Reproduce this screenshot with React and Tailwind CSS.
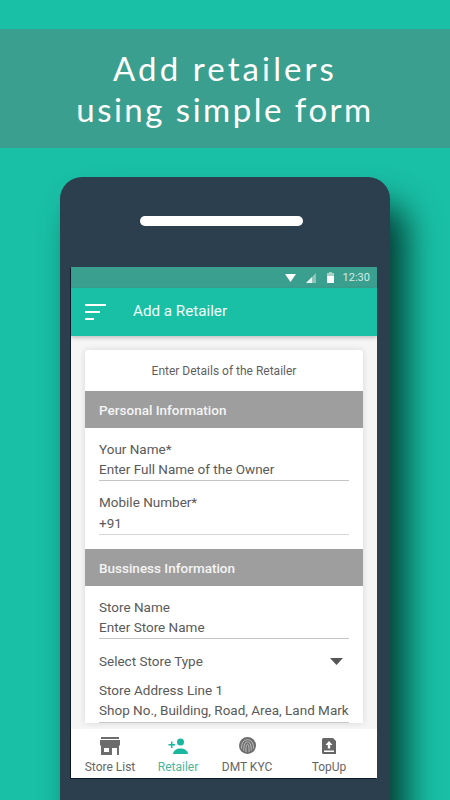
const Field = ({ label, value, className = "", valueClass = "h-[22px]", lineClass = "border-[#c4c4c4]" }) => (
  <div className={`flex flex-col ${className}`}>
    <div className="text-[13.5px] leading-[20px] text-[#5a5a5a]">{label}</div>
    <div className={`text-[13.5px] leading-[20px] text-[#5a5a5a] border-b ${valueClass} ${lineClass} whitespace-nowrap`}>{value}</div>
  </div>
);

const Section = ({ children }) => (
  <div className="h-[37px] bg-[#9e9e9e] flex items-center pl-[14px] pt-[1px] text-[13.5px] font-medium text-[#f4f4f4]">{children}</div>
);

const NavItem = ({ icon, label, active, className = "" }) => (
  <div className={`flex flex-col items-center ${className}`}>
    <div className="h-[25px] flex items-center justify-center">{icon}</div>
    <div className={`text-[12px] leading-[16px] mt-[1px] ${active ? "text-[#4cb59c]" : "text-[#666666]"}`}>{label}</div>
  </div>
);

export default function App() {
  return (
    <div className="w-[450px] h-[800px] overflow-hidden bg-[#19c0a6] flex flex-col font-['Roboto',sans-serif]">
      <div className="mt-[29px] h-[119px] shrink-0 bg-[#3a9f8f] flex flex-col items-center justify-center text-white font-['Lato',sans-serif] text-[33px] leading-[41px]">
        <div className="tracking-[3.1px]">Add retailers</div>
        <div className="tracking-[2.5px]">using simple form</div>
      </div>

      <div className="mt-[29px] ml-[60px] w-[330px] h-[700px] shrink-0 rounded-t-[22px] bg-[#2c3f4e] shadow-[16px_28px_34px_rgba(3,60,50,1)] flex flex-col items-start">
        <div className="mt-[39px] ml-[80px] w-[163px] h-[10px] rounded-full bg-white" />
        <div className="mt-[41px] ml-[11px] w-[306px] h-[511px] flex flex-col bg-[#f5f5f5] overflow-hidden shadow-[-1px_1px_0_#0b1a2a]">
          <div className="h-[21px] shrink-0 bg-[#3a9f8f] flex items-center justify-end pr-[7px] gap-[9px] text-[11px] text-[#d5ebe6]">
            <svg width="11" height="8" viewBox="0 0 11 8"><path d="M0 0h11L5.500 8z" fill="#ffffff" /></svg>
            <svg width="11" height="10" className="ml-[1px]" viewBox="0 0 11 10"><path d="M0 10L10 0v10z" fill="#8fc4b9" /><path d="M0 10L6 4v6z" fill="#e8f4f1" /></svg>
            <svg width="7" height="11" className="ml-[1px]" viewBox="0 0 7 11"><path d="M2 0h3v1h2v10H0V1h2z" fill="#a9cfc7" /><path d="M0 4h7v7H0z" fill="#ffffff" /></svg>
            <span className="leading-none">12:30</span>
          </div>
          <div className="h-[48px] shrink-0 bg-[#19c0a6] flex items-center shadow-[0_2px_4px_rgba(0,0,0,0.2)] relative">
            <div className="ml-[14px] w-[21px] flex flex-col gap-[5px]">
              <div className="h-[2px] w-[21px] bg-white" />
              <div className="h-[2px] w-[15px] bg-white" />
              <div className="h-[2px] w-[9px] bg-white" />
            </div>
            <div className="ml-[27px] mb-[2px] text-[15.2px] text-[#f2fbf9]">Add a Retailer</div>
          </div>
          <div className="flex-1 min-h-0 overflow-hidden px-[14px] pt-[14px]">
            <div className="bg-white rounded-t-[3px] shadow-[0_0_6px_rgba(0,0,0,0.12)]">
              <div className="h-[41px] flex items-center justify-center text-[12px] text-[#5f5f5f]">Enter Details of the Retailer</div>
              <Section>Personal Information</Section>
              <div className="px-[14px] pt-[11px] pb-[14px] flex flex-col">
                <Field label="Your Name*" value="Enter Full Name of the Owner" />
                <Field className="mt-[11px]" label="Mobile Number*" value="+91" valueClass="h-[23px] pt-[1px]" lineClass="border-[#d8d8d8]" />
              </div>
              <Section>Bussiness Information</Section>
              <div className="px-[14px] pt-[11px] flex flex-col">
                <Field label="Store Name" value="Enter Store Name" />
                <div className="h-[41px] flex items-center justify-between pr-[6px] pt-[3px] text-[13.5px] text-[#5a5a5a]">
                  <span>Select Store Type</span>
                  <svg width="13" height="7" viewBox="0 0 13 7"><path d="M0 0h13L6.500 7z" fill="#555555" /></svg>
                </div>
                <Field label="Store Address Line 1" value="Shop No., Building, Road, Area, Land Mark" valueClass="h-[23px]" lineClass="border-[#c8c8c8]" />
              </div>
            </div>
          </div>
          <div className="h-[49px] shrink-0 bg-white flex items-start pt-[4px]">
            <NavItem
              className="w-[78px]"
              label="Store List"
              icon={<svg width="20" height="18" viewBox="0 0 20 18"><path d="M1 0h18v2H1zM0 3h20l0 5.500h-1V18h-2v-7h-5v7H1V8.500H0z" fill="#6c6c6c" /><path d="M4 11h5v4H4z" fill="#ffffff" /></svg>}
            />
            <NavItem
              className="w-[62px] ml-[-2px]"
              active
              label="Retailer"
              icon={<svg width="20" height="16" viewBox="0 0 20 16"><circle cx="12.500" cy="4" r="3.500" fill="#19b79e" /><path d="M5 16c0-3.500 4-5.500 7.500-5.500S20 12.500 20 16z" fill="#19b79e" /><path d="M3 3.500h1.500V6H7v1.500H4.500V10H3V7.500H0.500V6H3z" fill="#19b79e" /></svg>}
            />
            <NavItem
              className="w-[76px]"
              label="DMT KYC"
              icon={<svg width="17" height="17" viewBox="0 0 17 17"><circle cx="8.500" cy="8.500" r="8.500" fill="#6e6e6e" /><g fill="none" stroke="#c8c8c8" strokeWidth="0.9"><path d="M2.500 11.500C2.500 5.500 5 2.800 8.500 2.800S14.500 5.500 14.500 11.500" /><path d="M4.700 13.500C4.700 7.500 6 5 8.500 5S12.300 7.500 12.300 13.500" /><path d="M6.900 15C6.900 9.500 7.300 7.300 8.500 7.300S10.100 9.500 10.100 15" /></g></svg>}
            />
            <NavItem
              className="w-[68px] ml-[10px]"
              label="TopUp"
              icon={<svg width="14" height="16" viewBox="0 0 14 16"><path d="M1.500 0H11l3 3v13H1.500A1.500 1.500 0 0 1 0 14.500v-13A1.500 1.500 0 0 1 1.500 0z" fill="#666666" /><path d="M7 3l3.500 4H8.200v3.500H5.800V7H3.500zM2 12.500h10V14H2z" fill="#ffffff" /></svg>}
            />
          </div>
        </div>
      </div>
    </div>
  );
}
